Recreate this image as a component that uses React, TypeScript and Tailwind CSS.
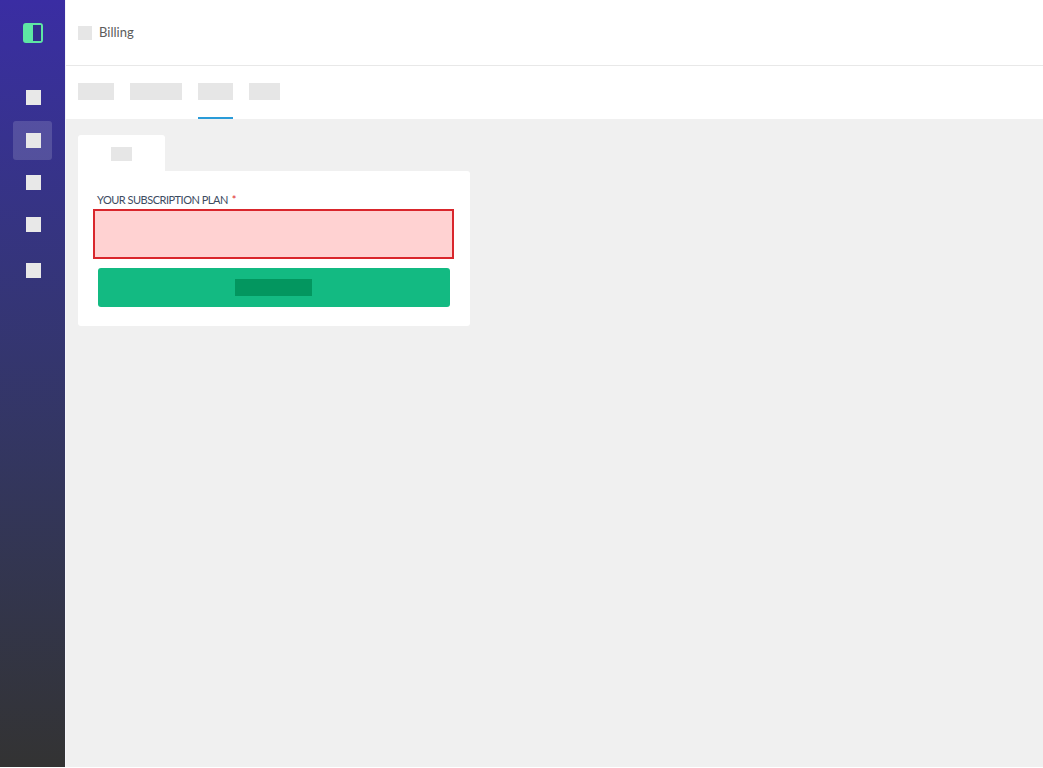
const NavSquare = ({ active }: { active?: boolean }) => (
  <div className={`flex h-[39px] w-[39px] items-center pl-[13px] rounded-[3px] ${active ? "bg-white/15" : ""}`}>
    <div className="h-[15px] w-[15px] bg-[#e8e8e8]" />
  </div>
);

const Block = ({ className }: { className: string }) => <div className={`h-[17px] bg-[#e6e6e6] ${className}`} />;

export default function App() {
  return (
    <div className="flex h-[767px] w-[1043px] overflow-hidden bg-[#f0f0f0] font-['Lato','Open_Sans',sans-serif]">
      <aside className="flex w-[65px] shrink-0 flex-col items-center bg-gradient-to-b from-[#3a2da3] to-[#333333]">
        <div className="mt-[23px] flex h-[20px] w-[20px] justify-end rounded-[3px] border-2 border-[#5ee6a4] bg-[#5ee6a4]">
          <div className="h-full w-[8px] bg-[#332c8c]" />
        </div>
        <div className="mt-[35px] flex flex-col items-center">
          <NavSquare />
          <div className="mt-[4px]">
            <NavSquare active />
          </div>
          <div className="mt-[3px]">
            <NavSquare />
          </div>
          <div className="mt-[3px]">
            <NavSquare />
          </div>
          <div className="mt-[7px]">
            <NavSquare />
          </div>
        </div>
      </aside>

      <main className="flex min-w-0 flex-1 flex-col border-l border-[#f4f4fa]">
        <header className="flex h-[66px] shrink-0 items-center border-b border-[#e8e8e8] bg-white pl-[12px]">
          <div className="h-[14px] w-[14px] bg-[#e6e6e6]" />
          <span className="ml-[7px] text-[13px] text-[#5c5c5c]">Billing</span>
        </header>

        <nav className="flex h-[53px] shrink-0 gap-[16px] bg-white pl-[12px]">
          <div className="pt-[17px]">
            <Block className="w-[36px]" />
          </div>
          <div className="pt-[17px]">
            <Block className="w-[52px]" />
          </div>
          <div className="border-b-2 border-[#2a9bd8] pt-[17px]">
            <Block className="w-[35px]" />
          </div>
          <div className="pt-[17px]">
            <Block className="w-[31px]" />
          </div>
        </nav>

        <section className="pl-[12px] pt-[16px]">
          <div className="flex h-[36px] w-[87px] items-start justify-center rounded-t-[3px] bg-white pt-[12px]">
            <div className="h-[14px] w-[21px] bg-[#e6e6e6]" />
          </div>
          <div className="h-[155px] w-[392px] rounded-b-[3px] rounded-tr-[3px] bg-white px-[20px] pt-[23px]">
            <label className="-ml-px flex h-[15px] items-start text-[11px] leading-none tracking-[-0.5px] text-[#3d4b5f]">
              YOUR SUBSCRIPTION PLAN <span className="ml-[4px] text-[#e02b2b]">*</span>
            </label>
            <div className="-ml-[5px] h-[50px] w-[361px] border-2 border-[#d9262c] bg-[#ffd2d2]" />
            <button className="mt-[9px] flex h-[39px] w-[352px] items-center justify-center rounded-[3px] bg-[#13ba82]">
              <span className="-ml-px h-[17px] w-[77px] bg-[#03965f]" />
            </button>
          </div>
        </section>
      </main>
    </div>
  );
}
